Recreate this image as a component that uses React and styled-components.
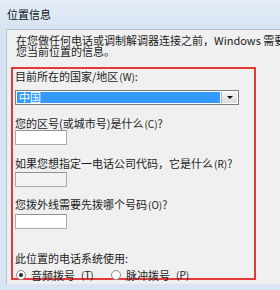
import { createGlobalStyle, styled } from "styled-components";

const GlobalStyle = createGlobalStyle`
  html, body {
    margin: 0;
    padding: 0;
  }
  body {
    width: 280px;
    height: 290px;
    overflow: hidden;
    background: #d9e5f3;
    font-family: "Noto Sans CJK SC", "Noto Sans", sans-serif;
    font-size: 11px;
    color: #1c1c1c;
  }
`;

const Window = styled.div`
  display: flex;
  flex-direction: column;
  width: 280px;
  height: 290px;
  background: linear-gradient(#e4edf8, #d6e3f2 30px, #d9e5f3);
`;

const TitleBar = styled.div`
  height: 29px;
  display: flex;
  align-items: center;
  padding-left: 7px;
  padding-bottom: 2px;
  box-sizing: border-box;
  font-size: 11px;
  color: #111;
`;

const Panel = styled.div`
  flex: 1;
  margin: 0 0 6px 6px;
  border-top: 1px solid #b8c3d1;
  border-left: 1px solid #b8c3d1;
  background: #f0f0f0;
  overflow: hidden;
  white-space: nowrap;
`;

const Intro = styled.p`
  margin: 5px 0 0 9px;
  line-height: 11px;
  font-size: 11px;
`;

const Highlight = styled.div`
  margin: 10px 0 0 4px;
  width: 245px;
  height: 213px;
  box-sizing: border-box;
  border: 2px solid #e5383b;
  padding: 0 2px;
`;

const Label = styled.div`
  margin-top: ${(p) => p.$gap}px;
  height: 12px;
  line-height: 12px;
  font-size: 11px;
`;

const Select = styled.div`
  margin-top: 8px;
  width: 224px;
  height: 15px;
  box-sizing: border-box;
  border: 1px solid #7d7d7d;
  background: #fff;
  display: flex;
  padding: 1px;
`;

const Selected = styled.div`
  flex: 1;
  background: #3399ff;
  color: #fff;
  line-height: 11px;
  font-size: 11px;
  padding-left: 2px;
`;

const DropButton = styled.div`
  width: 15px;
  margin-left: 1px;
  background: linear-gradient(#f4f4f4, #dcdcdc);
  border-left: 1px solid #b5b5b5;
  display: flex;
  align-items: center;
  justify-content: center;

  &::after {
    content: "";
    border-left: 3px solid transparent;
    border-right: 3px solid transparent;
    border-top: 3px solid #111;
  }
`;

const TextBox = styled.div`
  margin-top: ${(p) => p.$gap}px;
  width: 52px;
  height: 15px;
  box-sizing: border-box;
  border: 1px solid #a9acb2;
  border-top-color: #8e9196;
  background: ${(p) => (p.$disabled ? "#f3f3f3" : "#fff")};
`;

const RadioRow = styled.div`
  margin-top: 4px;
  display: flex;
  align-items: center;
  height: 13px;
`;

const RadioOption = styled.label`
  display: flex;
  align-items: center;
  gap: 5px;
  margin-left: 1px;
  width: ${(p) => p.$width}px;
`;

const RadioDot = styled.span`
  width: 8px;
  height: 8px;
  border-radius: 50%;
  border: 1px solid #8f8f8f;
  background: #fafafa;
  position: relative;

  &::after {
    content: "";
    display: ${(p) => (p.$checked ? "block" : "none")};
    position: absolute;
    left: 2px;
    top: 2px;
    width: 4px;
    height: 4px;
    border-radius: 50%;
    background: #1f2a3a;
  }
`;

const Hint = styled.span`
  font-size: 10px;
  margin-left: 1px;
`;

const App = () => {
  return (
    <>
      <GlobalStyle />
      <Window>
        <TitleBar>位置信息</TitleBar>
        <Panel>
          <Intro>
            在您做任何电话或调制解调器连接之前，Windows 需要知道
            <br />
            您当前位置的信息。
          </Intro>
          <Highlight>
            <Label $gap={1}>
              目前所在的国家/地区<Hint>(W)</Hint>:
            </Label>
            <Select>
              <Selected>中国</Selected>
              <DropButton />
            </Select>
            <Label $gap={12}>
              您的区号(或城市号)是什么<Hint>(C)</Hint>?
            </Label>
            <TextBox $gap={1} />
            <Label $gap={12}>
              如果您想指定一电话公司代码，它是什么<Hint>(R)</Hint>?
            </Label>
            <TextBox $gap={3} $disabled />
            <Label $gap={11}>
              您拨外线需要先拨哪个号码<Hint>(O)</Hint>?
            </Label>
            <TextBox $gap={4} />
            <Label $gap={23}>此位置的电话系统使用:</Label>
            <RadioRow>
              <RadioOption $width={94}>
                <RadioDot $checked />
                音频拨号<Hint>(T)</Hint>
              </RadioOption>
              <RadioOption $width={80}>
                <RadioDot />
                脉冲拨号<Hint>(P)</Hint>
              </RadioOption>
            </RadioRow>
          </Highlight>
        </Panel>
      </Window>
    </>
  );
};

export default App;
